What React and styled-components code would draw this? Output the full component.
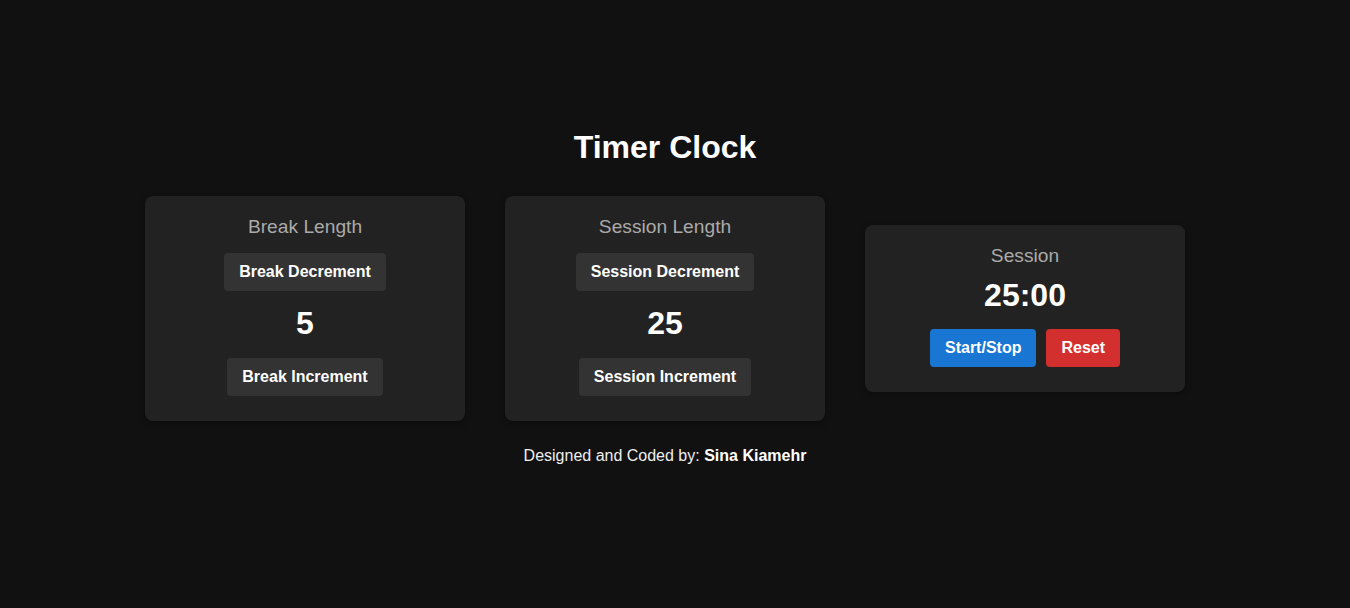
import React, { useState } from 'react'
import styled, { createGlobalStyle } from 'styled-components'

const GlobalStyle = createGlobalStyle`
  body {
    margin: 0;
    background: #111111;
    color: #ffffff;
    font-family: "Liberation Sans", Arial, sans-serif;
  }
`

export default function App () {
  const [breakLength] = useState(5)
  const [sessionLength] = useState(25)

  return (
    <Page>
      <GlobalStyle />
      <Title>Timer Clock</Title>
      <CardRow>
        <Card>
          <Label>Break Length</Label>
          <ControlButton>Break Decrement</ControlButton>
          <Value>{breakLength}</Value>
          <ControlButton>Break Increment</ControlButton>
        </Card>
        <Card>
          <Label>Session Length</Label>
          <ControlButton>Session Decrement</ControlButton>
          <Value>{sessionLength}</Value>
          <ControlButton>Session Increment</ControlButton>
        </Card>
        <Card>
          <Label>Session</Label>
          <TimeLeft>25:00</TimeLeft>
          <ActionRow>
            <ActionButton $color='#1976d2'>Start/Stop</ActionButton>
            <ActionButton $color='#d32f2f'>Reset</ActionButton>
          </ActionRow>
        </Card>
      </CardRow>
      <Footer>Designed and Coded by: <strong>Sina Kiamehr</strong></Footer>
    </Page>
  )
}

const Page = styled.div`
  display: flex;
  flex-direction: column;
  align-items: center;
  padding: 129px 20px 0 0;
`

const Title = styled.h1`
  margin: 0 0 30px;
  font-size: 32px;
  line-height: 37px;
  font-weight: 700;
`

const CardRow = styled.div`
  display: flex;
  align-items: center;
  gap: 40px;
`

const Card = styled.div`
  width: 320px;
  box-sizing: border-box;
  display: flex;
  flex-direction: column;
  align-items: center;
  padding: 20px 20px 25px;
  background: #222222;
  border-radius: 8px;
  box-shadow: 0 2px 6px rgba(0, 0, 0, 0.35);
`

const Label = styled.div`
  font-size: 19.2px;
  line-height: 21px;
  color: #aaaaaa;
  margin-bottom: 16px;
`

const ControlButton = styled.button`
  font-family: inherit;
  font-size: 16px;
  line-height: 18px;
  font-weight: 700;
  color: #ffffff;
  background: #333333;
  border: none;
  border-radius: 4px;
  padding: 10px 15px;
  cursor: pointer;
`

const Value = styled.div`
  font-size: 32px;
  line-height: 37px;
  font-weight: 700;
  margin: 14px 0 16px;
`

const TimeLeft = styled.div`
  font-size: 32px;
  line-height: 37px;
  font-weight: 700;
  margin: -5px 0 15px;
`

const ActionRow = styled.div`
  display: flex;
  gap: 10px;
`

const ActionButton = styled(ControlButton)`
  background: ${p => p.$color};
`

const Footer = styled.p`
  margin: 26px 0 0;
  font-size: 16px;
  line-height: 18px;
  color: #eeeeee;

  strong {
    color: #ffffff;
  }
`
